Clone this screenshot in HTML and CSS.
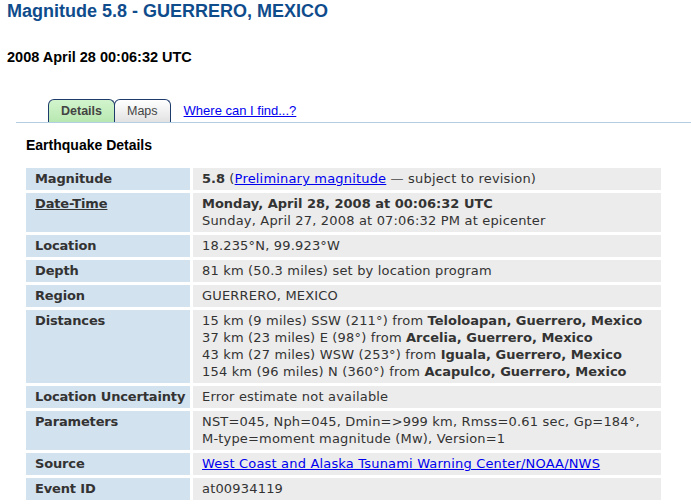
FILE: index.html
```html
<!DOCTYPE html>
<html>
<head>
   <title>Magnitude 5.8 - GUERRERO, MEXICO</title>
   <link rel="stylesheet" href="styles.css">
</head>
<body>
<div id="hd">
   <h1 class="title">Magnitude 5.8 - GUERRERO, MEXICO</h1>
   <h2 class="when">2008 April 28 00:06:32 UTC</h2>
</div>

<div class="tabbar">
   <span class="tab current">Details</span>
   <span class="tab">Maps</span>
   <a class="where" href="#">Where can I find...?</a>
</div>

<div id="bd">
   <h3 class="sect">Earthquake Details</h3>

   <table class="details">
      <tr>
         <th>Magnitude</th>
         <td><strong>5.8</strong> (<a href="#">Preliminary magnitude</a> <span class="dash">&mdash;</span> subject to revision)</td>
      </tr>
      <tr>
         <th><a href="#">Date-Time</a></th>
         <td><strong>Monday, April 28, 2008 at 00:06:32 UTC</strong><br>Sunday, April 27, 2008 at 07:06:32 PM at epicenter</td>
      </tr>
      <tr>
         <th>Location</th>
         <td>18.235&deg;N, 99.923&deg;W</td>
      </tr>
      <tr>
         <th>Depth</th>
         <td>81 km (50.3 miles) set by location program</td>
      </tr>
      <tr>
         <th>Region</th>
         <td>GUERRERO, MEXICO</td>
      </tr>
      <tr>
         <th>Distances</th>
         <td>15 km (9 miles) SSW (211&deg;) from <strong>Teloloapan, Guerrero, Mexico</strong><br>
             37 km (23 miles) E (98&deg;) from <strong>Arcelia, Guerrero, Mexico</strong><br>
             43 km (27 miles) WSW (253&deg;) from <strong>Iguala, Guerrero, Mexico</strong><br>
             154 km (96 miles) N (360&deg;) from <strong>Acapulco, Guerrero, Mexico</strong></td>
      </tr>
      <tr>
         <th>Location Uncertainty</th>
         <td>Error estimate not available</td>
      </tr>
      <tr>
         <th>Parameters</th>
         <td>NST=045, Nph=045, Dmin=&gt;999 km, Rmss=0.61 sec, Gp=184&deg;,<br>M-type=moment magnitude (Mw), Version=1</td>
      </tr>
      <tr>
         <th>Source</th>
         <td><a href="#">West Coast and Alaska Tsunami Warning Center/NOAA/NWS</a></td>
      </tr>
      <tr>
         <th>Event ID</th>
         <td>at00934119</td>
      </tr>
   </table>
</div>
</body>
</html>
```

FILE: styles.css
```css
* { margin: 0; padding: 0; }
body { font-family: "Liberation Sans", Arial, sans-serif; color: #000; background: #fff; }
a { color: #00e; }

#hd { padding-left: 7px; }
h1.title { font-size: 18px; line-height: 22px; color: #0f4c8c; }
h2.when { font-size: 14.5px; line-height: 18px; margin-top: 26px; color: #000; }

/* tab strip */
.tabbar { display: flex; align-items: flex-end; margin: 33px 0 0 16px; padding-left: 32px; border-bottom: 1px solid #b3cde2; }
.tab { display: block; height: 22px; line-height: 22px; padding: 0 12px; font-size: 12.5px; color: #444; border: 1px solid #1e3c6b; border-bottom: none; border-radius: 6px 6px 0 0; background: linear-gradient(#ffffff, #e2e2e2); }
.tab.current { font-weight: bold; background: linear-gradient(#d2f4cd, #b8e8b1); }
.tab + .tab { margin-left: -1px; }
.where { font-size: 13px; line-height: 22px; margin-left: 13px; }

#bd { padding-left: 23px; }
h3.sect { font-size: 14px; line-height: 18px; margin: 13px 0 0 3px; }

/* details table */
table.details { table-layout: fixed; width: 641px; border-spacing: 3px; margin-top: 11px; font-family: "DejaVu Sans", Verdana, sans-serif; font-size: 13px; line-height: 17px; color: #333; }
table.details th, table.details td { vertical-align: top; text-align: left; padding: 2px 9px 3px; }
table.details th { width: 151px; padding-right: 4px; white-space: nowrap; letter-spacing: -0.15px; background: #d3e2ef; }
table.details td { width: 450px; letter-spacing: 0.18px; background: #ececec; }
table.details td strong { letter-spacing: 0; }
table.details th a { color: #333; }
table.details .dash { color: #666; }
```
